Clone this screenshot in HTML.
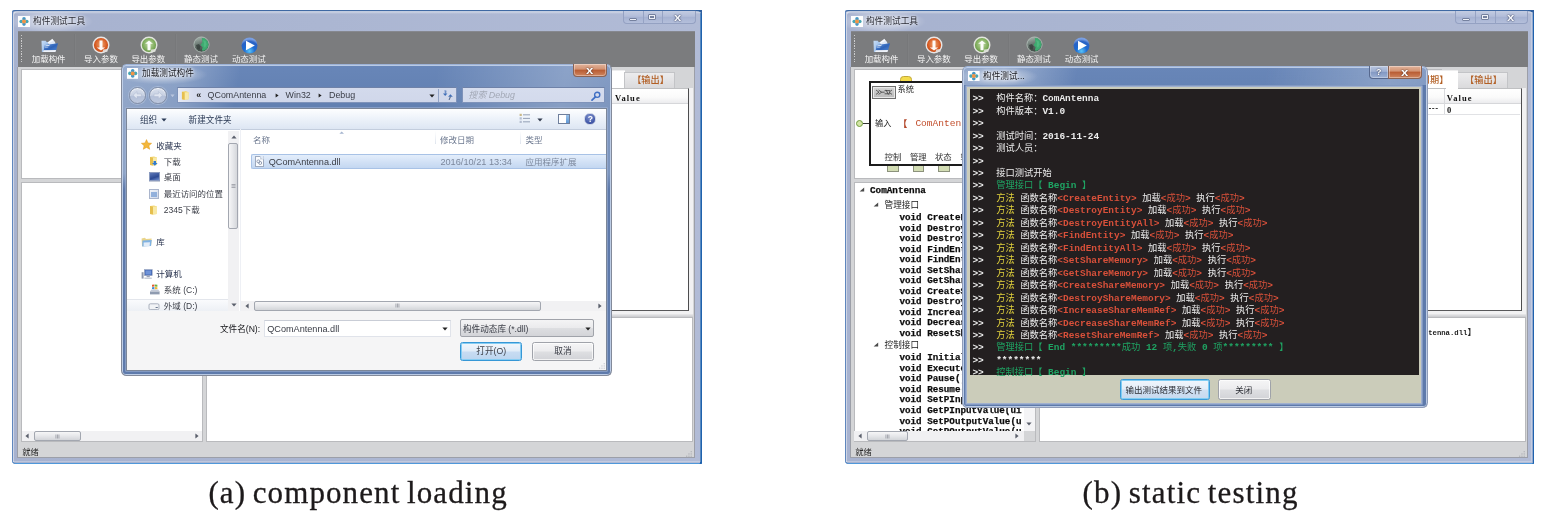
<!DOCTYPE html>
<html lang="zh"><head><meta charset="utf-8">
<title>component test tool</title>
<style>
html,body{margin:0;padding:0;background:#fff;}
body{width:1549px;height:516px;overflow:hidden;position:relative;}
#stage{filter:blur(.5px);position:absolute;left:0;top:0;width:1549px;height:516px;overflow:hidden;background:#fff;}
#stage div,#stage svg{position:absolute;box-sizing:border-box;}
.t{white-space:nowrap;}
.cjk{font-family:"Liberation Sans","Noto Sans CJK SC",sans-serif;}
.mono{font-family:"Liberation Mono","Noto Sans CJK SC",monospace;}
.serif{font-family:"Liberation Serif","Noto Serif CJK SC",serif;}
.song{font-family:"Liberation Serif","Noto Serif CJK SC",serif;}
.con{font-family:"Liberation Mono","Noto Sans CJK SC",monospace;font-weight:bold;}
.cj{font-size:9.25px;font-weight:normal;}
</style></head>
<body>
<div id="stage">
<div style="left:12px;top:10px;width:690px;height:453.6px;border-radius:2.5px 1px 1px 4px;background:linear-gradient(90deg,#a7b2cf 0%,#abb6d2 45%,#b1bbd6 100%);box-shadow:inset 1px 0 0 #5f86bd, inset 0 1.3px 0 #3f69a3, inset -2px 0 0 #1f62ad, inset 0 -1px 0 #4f98da;"></div>
<svg style="left:696px;top:10px;" width="6" height="6" viewBox="0 0 6 6"><path d="M0 0 H6 V6 Q5.6 1.4 0 1.2 Z" fill="#2f5f9f"/></svg>
<div style="left:13px;top:11px;width:687.5px;height:451px;border-radius:4px 4px 0 0;box-shadow:inset 1px 1px 0 rgba(255,255,255,.45), inset -1px -1px 0 rgba(255,255,255,.25);"></div>
<div style="left:13.5px;top:11.5px;width:86.5px;height:19.5px;background:radial-gradient(ellipse 50% 60% at 42% 50%,rgba(255,255,255,.5) 0%,rgba(255,255,255,.32) 55%,rgba(255,255,255,0) 100%);"></div>
<div style="left:13.5px;top:11.6px;width:687px;height:2.6px;background:linear-gradient(180deg,rgba(255,255,255,.38),rgba(255,255,255,0));"></div>
<svg style="left:18.3px;top:15.6px;" width="12" height="11" viewBox="0 0 12 11"><rect x="0" y="0" width="12" height="11" fill="#fdfdfd"/><circle cx="6" cy="2.9" r="1.8" fill="#4597c4"/><circle cx="6" cy="8.1" r="1.8" fill="#4597c4"/><circle cx="3.2" cy="5.5" r="1.8" fill="#46a6b4"/><circle cx="8.8" cy="5.5" r="1.8" fill="#46a6b4"/><circle cx="6" cy="5.5" r="2" fill="#f39445"/></svg>
<div class="t cjk" style="left:33px;top:14.9px;line-height:12px;font-size:8.7px;color:#2a2b34;text-shadow:0 0 3px #fff;">构件测试工具</div>
<div style="left:622.5px;top:10.5px;width:73px;height:13.7px;border:1px solid #94a1c2;border-top:none;border-radius:0 0 4px 4px;background:linear-gradient(180deg,#c3cce2 0%,#b2bdd9 45%,#a5b2d2 50%,#b4bfdb 100%);"></div>
<div style="left:642.5px;top:11px;width:0.8px;height:12.5px;background:#96a3c4;"></div>
<div style="left:662px;top:11px;width:0.8px;height:12.5px;background:#96a3c4;"></div>
<div style="left:628.8px;top:17.5px;width:8.2px;height:3.5px;background:#eef0f6;border:0.8px solid #75819f;border-radius:1px;"></div>
<div style="left:648px;top:13.6px;width:8px;height:6.8px;background:#eef0f6;border:0.8px solid #75819f;border-radius:1px;"></div>
<div style="left:650px;top:15.8px;width:4px;height:2.6px;background:#b3bdd6;border:0.6px solid #75819f;"></div>
<div class="t cjk" style="left:674.2px;top:11.2px;line-height:12px;font-size:10.5px;color:#f7f8fc;font-weight:bold;text-shadow:0 0 1px #39435f,0 0 1.5px #39435f;transform:scaleX(1.25);transform-origin:left center;">x</div>
<div style="left:18px;top:31px;width:677px;height:35.9px;background:#7b7c7e;box-shadow:inset 0 1px 0 #86888f;"></div>
<div style="left:20.7px;top:34.5px;width:1.5px;height:29px;background:repeating-linear-gradient(180deg,#d9d9da 0,#d9d9da 1.3px,#7b7c7e 1.3px,#7b7c7e 2.62px);opacity:.85;"></div>
<div style="left:74.3px;top:33.5px;width:0.8px;height:31.5px;background:#77787a;box-shadow:1px 0 0 #7f8082;"></div>
<div style="left:174.7px;top:33.5px;width:0.8px;height:31.5px;background:#77787a;box-shadow:1px 0 0 #7f8082;"></div>
<svg style="left:40.5px;top:37.7px;" width="18" height="15.5" viewBox="0 0 18 15.5"><defs><linearGradient id="fa0" x1="0" y1="0" x2="1" y2="1"><stop offset="0" stop-color="#c8def7"/><stop offset="1" stop-color="#86aee2"/></linearGradient><linearGradient id="fb0" x1="0" y1="0" x2="1" y2="1"><stop offset="0" stop-color="#6a9ee4"/><stop offset=".55" stop-color="#2f63b8"/><stop offset="1" stop-color="#4c84d2"/></linearGradient></defs><path d="M0.5 2.8 H4.8 L5.6 4 H7.4 V14 H0.9 Z" fill="url(#fa0)"/><path d="M6.7 4.2 L11.4 0.8 L14.2 4.8 L8.3 7.3 Z" fill="#f5f8fd"/><path d="M7.6 5.6 L12.6 2.6 L14.8 5.4 L9 7.6 Z" fill="#dfe8f6"/><path d="M3.8 6.9 L17 5.3 L15.1 12.4 L2.7 12.6 Z" fill="url(#fb0)"/><path d="M4.4 7.2 L8.7 6.7 L8.3 8 L4.1 8.6 Z" fill="#e6eefa" opacity=".85"/><path d="M4 9.2 L7.4 8.8 L7.2 9.6 L3.8 10 Z" fill="#cfe0f6" opacity=".7"/><path d="M2.7 12.3 L15.1 12.1 L14.5 14 L2.1 14 Z" fill="#eef2f9"/></svg>
<svg style="left:92.4px;top:36.2px;" width="18" height="18" viewBox="0 0 18 18"><defs><radialGradient id="go0" cx=".5" cy=".45" r=".6"><stop offset="0" stop-color="#f0a470"/><stop offset=".7" stop-color="#d65a22"/><stop offset="1" stop-color="#bd4512"/></radialGradient></defs><circle cx="9" cy="9" r="8.5" fill="#e7e6e6"/><circle cx="9" cy="9" r="7.1" fill="url(#go0)"/><path d="M7.5 4.4 H10.5 V11.4 H13.2 L9 14.5 L4.8 11.4 H7.5 Z" fill="#fff" opacity=".95"/><path d="M11.2 13.6 L15.8 13 L15.4 15.8 L10.4 16.4 Z" fill="#e4e0de" opacity=".9"/></svg>
<svg style="left:140.3px;top:36.2px;" width="18" height="18" viewBox="0 0 18 18"><defs><radialGradient id="gg0" cx=".5" cy=".45" r=".6"><stop offset="0" stop-color="#c4dca8"/><stop offset=".7" stop-color="#7dab5a"/><stop offset="1" stop-color="#5d8c3e"/></radialGradient></defs><circle cx="9" cy="9" r="8.5" fill="#e3e5df"/><circle cx="9" cy="9" r="7.1" fill="url(#gg0)"/><path d="M7.5 14.2 H10.5 V7.8 H12.9 L9 4.6 L5.1 7.8 H7.5 Z" fill="#fff" opacity=".95"/><path d="M11.2 13.6 L15.8 13 L15.4 15.8 L10.4 16.4 Z" fill="#e0e3dc" opacity=".9"/></svg>
<svg style="left:192.9px;top:36.3px;" width="17" height="17" viewBox="0 0 17 17"><defs><linearGradient id="gd0" x1=".2" y1="0" x2=".5" y2="1"><stop offset="0" stop-color="#a9b6b0"/><stop offset=".45" stop-color="#6d7b75"/><stop offset="1" stop-color="#3b4541"/></linearGradient></defs><circle cx="8.5" cy="8.5" r="7.6" fill="url(#gd0)" stroke="#b4c0ba" stroke-width=".8"/><path d="M8.8 2 L11.6 2.3 L14.4 4.8 L15.6 8.4 L14.4 12.2 L11.2 14.8 L8.8 14.6 L9.6 11.2 L7.6 9 L9.4 6.2 Z" fill="#3eaa70"/><path d="M10 4 L12.6 5 L13.6 8.6 L12 12 L10.6 10 L11 7 Z" fill="#56bd86" opacity=".7"/><path d="M3 9 L6 8 L7.6 10.6 L6.4 14 L4 12.8 Z" fill="#323b38" opacity=".75"/></svg>
<svg style="left:240.5px;top:36.5px;" width="17" height="17" viewBox="0 0 17 17"><defs><radialGradient id="gb0" cx=".5" cy=".85" r=".75"><stop offset="0" stop-color="#58c4f8"/><stop offset=".45" stop-color="#1d6ad2"/><stop offset=".8" stop-color="#2a62c4"/><stop offset="1" stop-color="#7a9fe2"/></radialGradient></defs><circle cx="8.5" cy="8.5" r="8" fill="url(#gb0)"/><path d="M5 3.8 L13.8 8.5 L5 13.2 Z" fill="#fff"/></svg>
<div class="t cjk" style="left:31.8px;top:53.2px;line-height:12px;font-size:8.45px;color:#f4f4f4;">加载构件</div>
<div class="t cjk" style="left:84.1px;top:53.2px;line-height:12px;font-size:8.45px;color:#f4f4f4;">导入参数</div>
<div class="t cjk" style="left:131.4px;top:53.2px;line-height:12px;font-size:8.45px;color:#f4f4f4;">导出参数</div>
<div class="t cjk" style="left:184.1px;top:53.2px;line-height:12px;font-size:8.45px;color:#f4f4f4;">静态测试</div>
<div class="t cjk" style="left:231.9px;top:53.2px;line-height:12px;font-size:8.45px;color:#f4f4f4;">动态测试</div>
<div style="left:17.4px;top:66.9px;width:677.6px;height:391.1px;background:#d4d5d7;border:1px solid #9c9fa8;border-top:none;"></div>
<div class="t cjk" style="left:22.3px;top:446px;line-height:12px;font-size:8.3px;color:#2a2a2a;">就绪</div>
<svg style="left:685px;top:449.5px;" width="8" height="8" viewBox="0 0 8 8"><g fill="#b4b6bb"><rect x="5.6" y="1" width="1.3" height="1.3"/><rect x="5.6" y="3.3" width="1.3" height="1.3"/><rect x="3.3" y="3.3" width="1.3" height="1.3"/><rect x="5.6" y="5.6" width="1.3" height="1.3"/><rect x="3.3" y="5.6" width="1.3" height="1.3"/><rect x="1" y="5.6" width="1.3" height="1.3"/></g></svg>
<div style="left:20.8px;top:68.8px;width:182px;height:110.4px;background:#fff;border:1px solid #b9babd;"></div>
<div style="left:20.8px;top:182.2px;width:182px;height:260px;background:#fff;border:1px solid #b9babd;"></div>
<div style="left:205.6px;top:68.8px;width:403.9px;height:241.8px;background:#fff;border:1px solid #b9babd;"></div>
<div style="left:205.6px;top:317.4px;width:487px;height:124.8px;background:#fff;border:1px solid #b9babd;"></div>
<div style="left:612.4px;top:88.4px;width:81px;height:226px;background:#f1f1f2;"></div>
<div style="left:205.6px;top:314.4px;width:487.8px;height:3px;background:linear-gradient(180deg,#e9e9eb,#c9cacd);"></div>
<div style="left:612.4px;top:69.6px;width:12.6px;height:19.9px;background:#fff;border-top:1px solid #ededee;"></div>
<div style="left:624.4px;top:71.8px;width:51px;height:16.2px;background:linear-gradient(180deg,#ececed 0%,#e3e3e5 50%,#dadadc 100%);border:1px solid #c3c4c7;border-bottom:none;"></div>
<div class="t cjk" style="left:632.2px;top:74.2px;line-height:12px;font-size:9.2px;color:#b25f24;font-weight:500;">【输出】</div>
<div style="left:612.4px;top:88.4px;width:76.8px;height:222.6px;background:#fff;border-right:1.4px solid #4d4d4f;border-bottom:1.4px solid #58585a;border-top:1px solid #bfc0c2;"></div>
<div style="left:612.4px;top:89.4px;width:75.4px;height:14.4px;background:linear-gradient(180deg,#fff 0%,#fafafa 60%,#ececee 100%);border-bottom:1px solid #d6d7da;"></div>
<div style="left:21.8px;top:431px;width:180px;height:10.2px;background:#f1f1f3;"></div>
<div style="left:34px;top:431.3px;width:47.4px;height:9.7px;border:1px solid #a3a7b0;border-radius:2px;background:linear-gradient(180deg,#f6f6f7 0%,#e6e7ea 50%,#d3d5d9 100%);"></div>
<svg style="left:55.2px;top:433.6px;" width="5" height="5" viewBox="0 0 5 5"><g fill="#8d9099"><rect x="0.6" y="0.5" width=".7" height="4"/><rect x="2.1" y="0.5" width=".7" height="4"/><rect x="3.6" y="0.5" width=".7" height="4"/></g></svg>
<svg style="left:25.2px;top:433.2px;" width="4" height="6" viewBox="0 0 4 6"><path d="M3.6 0.4 V5.6 L0.4 3 Z" fill="#5a5f6b"/></svg>
<svg style="left:195px;top:433.2px;" width="4" height="6" viewBox="0 0 4 6"><path d="M0.4 0.4 V5.6 L3.6 3 Z" fill="#5a5f6b"/></svg>
<div class="t song" style="left:615px;top:92.2px;line-height:12px;font-size:8.5px;color:#111;font-weight:bold;letter-spacing:1.05px;">Value</div>
<div style="left:121.1px;top:63.8px;width:491px;height:311.9px;border-radius:5.5px;border:1px solid #838a9a;border-top-color:#9db2d6;background:linear-gradient(100deg,rgba(255,255,255,.30) 0%,rgba(255,255,255,.24) 12%,rgba(255,255,255,0) 22%,rgba(255,255,255,0) 58%,rgba(255,255,255,.24) 82%,rgba(255,255,255,.12) 100%),linear-gradient(180deg,#6886b8 0%,#6280b1 12%,#6280b0 100%);box-shadow:inset 0 0 0 1px rgba(200,214,236,.85);"></div>
<div style="left:123.1px;top:106.7px;width:487px;height:267px;border-radius:0 0 3px 3px;background:linear-gradient(180deg,rgba(95,124,174,0) 0%,rgba(95,124,174,0) 24.83%,#5e7aab 30.83%,#5e7aab 100%);"></div>
<div style="left:125.9px;top:107.7px;width:481.3px;height:263.2px;background:#7b8698;box-shadow:0 0 0 .6px rgba(170,188,220,.8);"></div>
<div style="left:126.9px;top:108.7px;width:479.3px;height:261.2px;background:#fff;"></div>
<div style="left:123.5px;top:65.5px;width:91.5px;height:18.5px;background:radial-gradient(ellipse 50% 55% at 42% 48%,rgba(255,255,255,.5) 0%,rgba(255,255,255,.28) 55%,rgba(255,255,255,0) 100%);"></div>
<svg style="left:127px;top:68.2px;" width="11.4" height="10.8" viewBox="0 0 11.4 10.8"><rect x="0" y="0" width="11.4" height="10.8" fill="#fdfdfd"/><circle cx="5.7" cy="2.8" r="1.8" fill="#4597c4"/><circle cx="5.7" cy="8" r="1.8" fill="#4597c4"/><circle cx="2.9" cy="5.4" r="1.8" fill="#46a6b4"/><circle cx="8.5" cy="5.4" r="1.8" fill="#46a6b4"/><circle cx="5.7" cy="5.4" r="2" fill="#f39445"/></svg>
<div class="t cjk" style="left:142px;top:67.3px;line-height:12px;font-size:8.65px;color:#15161c;text-shadow:0 0 3px #fff,0 0 5px #fff;">加载测试构件</div>
<div style="left:573.3px;top:64.4px;width:33.7px;height:12.2px;border-radius:0 0 4px 4px;border:1px solid #8a6253;border-top:none;background:linear-gradient(180deg,#e2b49c 0%,#d39474 42%,#b95d34 52%,#cf8660 100%);box-shadow:inset 0 0 0 1px rgba(255,255,255,.35);"></div>
<div class="t cjk" style="left:586.3px;top:63.6px;line-height:12px;font-size:10.5px;color:#fff;font-weight:bold;text-shadow:0 0 1px #5a3326,0 0 1.5px #5a3326;transform:scaleX(1.25);transform-origin:left center;">x</div>
<div style="left:128.8px;top:86.5px;width:17.6px;height:17.6px;border-radius:50%;border:1.2px solid #8490a8;background:linear-gradient(180deg,#d6ddeb 0%,#c9d2e3 48%,#b5c1d9 54%,#bcc7dd 100%);box-shadow:inset 0 1px 1px rgba(255,255,255,.7), 0 0 0 1px rgba(190,203,228,.5);"></div>
<div style="left:149.4px;top:86.5px;width:17.6px;height:17.6px;border-radius:50%;border:1.2px solid #8490a8;background:linear-gradient(180deg,#d6ddeb 0%,#c9d2e3 48%,#b5c1d9 54%,#bcc7dd 100%);box-shadow:inset 0 1px 1px rgba(255,255,255,.7), 0 0 0 1px rgba(190,203,228,.5);"></div>
<svg style="left:132.4px;top:91px;" width="10.4" height="8.6" viewBox="0 0 10.4 8.6"><path d="M5 0.6 L1 4.3 L5 8 V5.6 H9.4 V3 H5 Z" fill="#dfe5f0" stroke="#aab6cf" stroke-width=".5"/></svg>
<svg style="left:153px;top:91px;" width="10.4" height="8.6" viewBox="0 0 10.4 8.6"><path d="M5.4 0.6 L9.4 4.3 L5.4 8 V5.6 H1 V3 H5.4 Z" fill="#dfe5f0" stroke="#aab6cf" stroke-width=".5"/></svg>
<svg style="left:169.6px;top:93.8px;" width="5" height="3.6" viewBox="0 0 5 3.6"><path d="M0.4 0.6 H4.6 L2.5 3.2 Z" fill="#b9c6de"/></svg>
<div style="left:177.4px;top:87px;width:279.2px;height:15.5px;background:linear-gradient(90deg,#e6eaf5 0%,#d6dcee 6%,rgba(208,215,234,0) 12%),linear-gradient(180deg,#d3daec 0%,#d0d7ea 100%);border:1px solid #7f93ba;border-top-color:#6f82a8;"></div>
<svg style="left:181.4px;top:89.6px;" width="9" height="11.4" viewBox="0 0 9.5 10.5"><path d="M1 1 L5 0.4 L8 1.6 L8 9 L4 9.4 L1 9 Z" fill="#f2d777"/><path d="M1 1 L4 1.8 L4 9.4 L1 9 Z" fill="#e6bf4e"/><path d="M4 1.8 L8 1.6 L8 9 L4 9.4 Z" fill="#f8e9a6"/></svg>
<div class="t cjk" style="left:196.2px;top:88.8px;line-height:12px;font-size:9px;color:#222;font-weight:bold;">«</div>
<div class="t cjk" style="left:207.6px;top:89.2px;line-height:12px;font-size:8.9px;color:#3a3d46;">QComAntenna</div>
<svg style="left:274.6px;top:93px;" width="4" height="5" viewBox="0 0 4 5"><path d="M0.6 0.4 L3.6 2.5 L0.6 4.6 Z" fill="#222"/></svg>
<div class="t cjk" style="left:285.6px;top:89.2px;line-height:12px;font-size:8.9px;color:#3a3d46;">Win32</div>
<svg style="left:317.8px;top:93px;" width="4" height="5" viewBox="0 0 4 5"><path d="M0.6 0.4 L3.6 2.5 L0.6 4.6 Z" fill="#222"/></svg>
<div class="t cjk" style="left:329px;top:89.2px;line-height:12px;font-size:8.9px;color:#3a3d46;">Debug</div>
<svg style="left:429.2px;top:94px;" width="6" height="4" viewBox="0 0 6 4"><path d="M0.4 0.5 H5.6 L3 3.6 Z" fill="#222"/></svg>
<div style="left:438.2px;top:88.8px;width:0.8px;height:13px;background:#93a4c6;"></div>
<svg style="left:443px;top:89.5px;" width="10" height="10.5" viewBox="0 0 10 10.5"><path d="M1.5 0.1 L3.5 0.7 L3.2 3.7 L1.8 3.7 Z" fill="#6f8fc4"/><path d="M0 3.6 H4.4 L2.2 6.1 Z" fill="#3f6fb8"/><path d="M5.1 6.7 H9.8 L7.45 4.3 Z" fill="#3f6fb8"/><path d="M6.9 6.6 L8.1 6.6 L6.4 10.3 L5.6 10 Z" fill="#56688a"/></svg>
<div style="left:461.6px;top:87px;width:143.6px;height:15.5px;background:linear-gradient(180deg,#d6ddee 0%,#d3daec 100%);border:1px solid #7f93ba;border-top-color:#6f82a8;"></div>
<div class="t cjk" style="left:468.6px;top:89.2px;line-height:12px;font-size:8.9px;color:#a3a9b6;font-style:italic;">搜索 Debug</div>
<svg style="left:591.4px;top:90.6px;" width="10" height="10" viewBox="0 0 10 10"><circle cx="6.2" cy="3.8" r="2.6" fill="none" stroke="#3f6fc4" stroke-width="1.4"/><path d="M4.4 5.8 L1 9.2" stroke="#3f6fc4" stroke-width="1.7" stroke-linecap="round"/></svg>
<div style="left:126.9px;top:108.7px;width:479.3px;height:21.3px;background:linear-gradient(180deg,#fdfeff 0%,#eef3fa 45%,#dde6f3 100%);border-bottom:1px solid #c3cddd;"></div>
<div class="t cjk" style="left:140px;top:114.1px;line-height:12px;font-size:8.6px;color:#2b3a55;">组织</div>
<svg style="left:161.2px;top:118.4px;" width="6" height="4" viewBox="0 0 6 4"><path d="M0.4 0.5 H5.6 L3 3.6 Z" fill="#2b3a55"/></svg>
<div class="t cjk" style="left:188.6px;top:114.1px;line-height:12px;font-size:8.6px;color:#2b3a55;">新建文件夹</div>
<svg style="left:519.4px;top:113.4px;" width="12" height="11" viewBox="0 0 12 11"><g fill="#8a97ae"><rect x="0.6" y="0.8" width="2.2" height="2.2" fill="#c9b98a"/><rect x="0.6" y="4.3" width="2.2" height="2.2" fill="#b4bdd0"/><rect x="0.6" y="7.8" width="2.2" height="2.2" fill="#b4bdd0"/><rect x="4" y="1.4" width="7" height=".9"/><rect x="4" y="4.9" width="7" height=".9"/><rect x="4" y="8.4" width="7" height=".9"/></g></svg>
<svg style="left:537px;top:117.6px;" width="6" height="4" viewBox="0 0 6 4"><path d="M0.4 0.5 H5.6 L3 3.6 Z" fill="#333c4e"/></svg>
<div style="left:558.4px;top:113.8px;width:11.8px;height:10.4px;background:#fff;border:1px solid #6f7f9c;"></div>
<div style="left:566px;top:114.8px;width:3.2px;height:8.4px;background:linear-gradient(180deg,#9cc3ea,#5f97d6);"></div>
<div style="left:584.4px;top:113.4px;width:11.2px;height:11.2px;border-radius:50%;background:radial-gradient(circle at 45% 30%,#7f93cf 0%,#3f55a6 70%,#32438c 100%);border:.6px solid #c7cfe4;"></div>
<div class="t cjk" style="left:587.7px;top:113.2px;line-height:12px;font-size:8.6px;color:#fff;font-weight:bold;">?</div>
<div style="left:126.9px;top:130px;width:479.3px;height:181.4px;background:#fff;"></div>
<div style="left:228px;top:131px;width:10.8px;height:180.4px;background:#f1f1f3;"></div>
<div style="left:228.4px;top:143.4px;width:10px;height:85.2px;border:1px solid #a3a7b0;border-radius:2px;background:linear-gradient(90deg,#f6f6f7 0%,#e6e7ea 50%,#d5d7db 100%);"></div>
<svg style="left:231px;top:184.4px;" width="5" height="4" viewBox="0 0 5 4"><g fill="#8d9099"><rect x="0.5" y="0.2" width="4" height=".7"/><rect x="0.5" y="1.6" width="4" height=".7"/><rect x="0.5" y="3" width="4" height=".7"/></g></svg>
<svg style="left:230.6px;top:135.4px;" width="6" height="4" viewBox="0 0 6 4"><path d="M3 0.4 L5.6 3.6 H0.4 Z" fill="#5a5f6b"/></svg>
<svg style="left:230.6px;top:303.4px;" width="6" height="4" viewBox="0 0 6 4"><path d="M0.4 0.4 H5.6 L3 3.6 Z" fill="#5a5f6b"/></svg>
<div style="left:239.6px;top:129px;width:0.8px;height:182.4px;background:#eef0f5;"></div>
<svg style="left:141.4px;top:139.4px;" width="11" height="11" viewBox="0 0 11 11"><path d="M5.5 0.6 L7 4 L10.6 4.3 L7.9 6.7 L8.7 10.3 L5.5 8.4 L2.3 10.3 L3.1 6.7 L0.4 4.3 L4 4 Z" fill="#f3b73c" stroke="#e09a1d" stroke-width=".5"/></svg>
<div class="t cjk" style="left:156.3px;top:139.6px;line-height:12px;font-size:8.5px;color:#2a3550;">收藏夹</div>
<svg style="left:149.4px;top:156px;" width="9.5" height="10.5" viewBox="0 0 9.5 10.5"><path d="M1 1 L5 0.4 L8 1.6 L8 9 L4 9.4 L1 9 Z" fill="#f2d777"/><path d="M1 1 L4 1.8 L4 9.4 L1 9 Z" fill="#e6bf4e"/><path d="M4 1.8 L8 1.6 L8 9 L4 9.4 Z" fill="#f8e9a6"/><path d="M4.6 5 H7 V7 H8.6 L5.8 9.8 L3 7 H4.6 Z" fill="#2f7ad1"/></svg>
<div class="t cjk" style="left:163.8px;top:155.6px;line-height:12px;font-size:8.5px;color:#3a3d46;">下载</div>
<div style="left:148.6px;top:172.4px;width:11px;height:8.2px;background:linear-gradient(160deg,#5d78b8 0%,#2c4a94 60%,#6f8fd0 100%);border:.6px solid #8a9abf;"></div>
<div style="left:148.6px;top:180.6px;width:11px;height:1.4px;background:#c5cbd8;"></div>
<div class="t cjk" style="left:163.8px;top:171.4px;line-height:12px;font-size:8.5px;color:#3a3d46;">桌面</div>
<div style="left:149.2px;top:188.6px;width:10.2px;height:10.8px;background:linear-gradient(135deg,#f2f4f8 0%,#cfd9ea 100%);border:.6px solid #aab5cc;"></div>
<div style="left:151.4px;top:191.6px;width:6px;height:5px;background:#7ea3d6;opacity:.8;"></div>
<div class="t cjk" style="left:163.8px;top:188px;line-height:12px;font-size:8.45px;color:#3a3d46;">最近访问的位置</div>
<svg style="left:149.4px;top:204.6px;" width="9.5" height="10.5" viewBox="0 0 9.5 10.5"><path d="M1 1 L5 0.4 L8 1.6 L8 9 L4 9.4 L1 9 Z" fill="#f2d777"/><path d="M1 1 L4 1.8 L4 9.4 L1 9 Z" fill="#e6bf4e"/><path d="M4 1.8 L8 1.6 L8 9 L4 9.4 Z" fill="#f8e9a6"/></svg>
<div class="t cjk" style="left:163.8px;top:203.8px;line-height:12px;font-size:8.5px;color:#3a3d46;">2345下载</div>
<svg style="left:141.4px;top:236.4px;" width="11.4" height="11" viewBox="0 0 11.4 11"><path d="M0.6 2.6 L4 1.8 L5 3 L10.6 2.6 L10.2 9.6 L1 10.2 Z" fill="#e9d48a"/><path d="M1.4 4.6 L10.8 4 L10 10 L1.2 10.4 Z" fill="#7fb2e4"/><path d="M2.6 6.6 L9 6.2 L8.6 10 L2.6 10.3 Z" fill="#f4f7fb" opacity=".85"/></svg>
<div class="t cjk" style="left:156.3px;top:236px;line-height:12px;font-size:8.5px;color:#2a3550;">库</div>
<svg style="left:141.4px;top:268.6px;" width="12" height="11.4" viewBox="0 0 12 11.4"><rect x="3.4" y="0.6" width="7.8" height="6" fill="#3b5fae" stroke="#9aa6c0" stroke-width=".6"/><rect x="4.4" y="1.4" width="5.8" height="4.2" fill="#6f93d8"/><rect x="5.6" y="6.8" width="3.2" height="1.4" fill="#9aa3b6"/><rect x="0.6" y="3.2" width="2" height="6.4" fill="#8f98ac"/><rect x="3.4" y="8.6" width="7.4" height="1.2" fill="#b9c0cf"/></svg>
<div class="t cjk" style="left:156.3px;top:268.3px;line-height:12px;font-size:8.5px;color:#2a3550;">计算机</div>
<svg style="left:148.6px;top:284.2px;" width="11.6" height="11.2" viewBox="0 0 11.6 11.2"><path d="M1 7.4 H10.6 V10.4 H1 Z" fill="#8f9bb0"/><path d="M1 7.4 L2.4 5.6 H9.2 L10.6 7.4 Z" fill="#c3cad8"/><path d="M3 0.8 L5.4 0.4 L5.4 2.6 L3 2.8 Z" fill="#e2592d"/><path d="M5.8 0.4 L8.4 0.8 L8.4 2.8 L5.8 2.6 Z" fill="#6db33f"/><path d="M3 3.2 L5.4 3 L5.4 5.2 L3 5 Z" fill="#3f8bd8"/><path d="M5.8 3 L8.4 3.2 L8.4 5 L5.8 5.2 Z" fill="#f2b734"/></svg>
<div class="t cjk" style="left:163.8px;top:284.2px;line-height:12px;font-size:8.5px;color:#3a3d46;">系统 (C:)</div>
<div style="left:126.9px;top:298.6px;width:101.1px;height:12.8px;background:linear-gradient(180deg,#fafbfd 0%,#edf0f5 100%);border-top:1px solid #e3e6ec;"></div>
<svg style="left:148.4px;top:301.6px;" width="12" height="8.8" viewBox="0 0 12 8.8"><path d="M1 3 Q1 1.8 2.4 1.8 H9.6 Q11 1.8 11 3 V6.4 Q11 7.6 9.6 7.6 H2.4 Q1 7.6 1 6.4 Z" fill="#f1f3f6" stroke="#8e97a8" stroke-width=".7"/><rect x="7.6" y="5" width="2.2" height="1" fill="#6b7890"/></svg>
<div class="t cjk" style="left:163.8px;top:300.1px;line-height:12px;font-size:8.5px;color:#3a3d46;">外域 (D:)</div>
<div class="t cjk" style="left:253px;top:134.3px;line-height:12px;font-size:8.5px;color:#6d7990;">名称</div>
<svg style="left:339.4px;top:131.4px;" width="5.4" height="3.2" viewBox="0 0 5.4 3.2"><path d="M2.7 0.4 L5 2.8 H0.4 Z" fill="#a5b5cf"/></svg>
<div style="left:435.4px;top:131px;width:0.8px;height:13px;background:linear-gradient(180deg,#fff,#dfe5ee);"></div>
<div style="left:520.4px;top:131px;width:0.8px;height:13px;background:linear-gradient(180deg,#fff,#dfe5ee);"></div>
<div class="t cjk" style="left:440px;top:134.3px;line-height:12px;font-size:8.5px;color:#6d7990;">修改日期</div>
<div class="t cjk" style="left:525.6px;top:134.3px;line-height:12px;font-size:8.5px;color:#6d7990;">类型</div>
<div style="left:250.8px;top:153.8px;width:355.4px;height:15.6px;background:linear-gradient(180deg,#e4eefb 0%,#d3e2f6 50%,#c3d7f1 100%);border:1px solid #a8c2e6;border-right:none;border-radius:2px 0 0 2px;"></div>
<div style="left:254.6px;top:156.2px;width:9px;height:10.4px;background:#fbfcfe;border:.7px solid #9da9bd;"></div>
<svg style="left:260.2px;top:156.2px;" width="3.6" height="3.6" viewBox="0 0 3.6 3.6"><path d="M0 0 L3.6 3.6 H0 Z" fill="#c9d1de"/><path d="M0 0 L3.6 3.6 V0 Z" fill="#dfe9f8"/></svg>
<svg style="left:256px;top:158.6px;" width="6.4" height="6.2" viewBox="0 0 6.4 6.2"><circle cx="2.4" cy="2.4" r="1.5" fill="none" stroke="#7f8da6" stroke-width=".8"/><circle cx="4.2" cy="4" r="1.5" fill="none" stroke="#7f8da6" stroke-width=".8"/></svg>
<div class="t cjk" style="left:268.8px;top:155.7px;line-height:12px;font-size:9.1px;color:#3a3d46;">QComAntenna.dll</div>
<div class="t cjk" style="left:440.4px;top:155.7px;line-height:12px;font-size:9.2px;color:#7b879c;">2016/10/21 13:34</div>
<div class="t cjk" style="left:525.6px;top:155.7px;line-height:12px;font-size:8.5px;color:#7b879c;">应用程序扩展</div>
<div style="left:241px;top:300.6px;width:365.2px;height:10.8px;background:#f1f1f3;"></div>
<div style="left:254.4px;top:301px;width:287px;height:9.8px;border:1px solid #a3a7b0;border-radius:2px;background:linear-gradient(180deg,#f6f6f7 0%,#e6e7ea 50%,#d3d5d9 100%);"></div>
<svg style="left:395px;top:303.4px;" width="5" height="5" viewBox="0 0 5 5"><g fill="#8d9099"><rect x="0.6" y="0.5" width=".7" height="4"/><rect x="2.1" y="0.5" width=".7" height="4"/><rect x="3.6" y="0.5" width=".7" height="4"/></g></svg>
<svg style="left:245px;top:303px;" width="4" height="6" viewBox="0 0 4 6"><path d="M3.6 0.4 V5.6 L0.4 3 Z" fill="#5a5f6b"/></svg>
<svg style="left:598.4px;top:303px;" width="4" height="6" viewBox="0 0 4 6"><path d="M0.4 0.4 V5.6 L3.6 3 Z" fill="#5a5f6b"/></svg>
<div style="left:126.9px;top:311.4px;width:479.3px;height:59px;background:#f5f5f6;"></div>
<div class="t cjk" style="left:220px;top:322.6px;line-height:12px;font-size:8.6px;color:#15161a;">文件名(N):</div>
<div style="left:264.4px;top:320px;width:186.4px;height:17px;background:#fff;border:1px solid #e0e3ea;border-top-color:#c9cdd6;"></div>
<div class="t cjk" style="left:267.2px;top:322.7px;line-height:12px;font-size:9.15px;color:#3a3d46;">QComAntenna.dll</div>
<svg style="left:441.6px;top:327px;" width="6" height="4" viewBox="0 0 6 4"><path d="M0.4 0.5 H5.6 L3 3.6 Z" fill="#222"/></svg>
<div style="left:460.4px;top:319.4px;width:133.6px;height:17.6px;border:1px solid #a0a3aa;border-radius:2px;background:linear-gradient(180deg,#f4f4f5 0%,#ebebed 48%,#dddee1 52%,#d3d4d8 100%);"></div>
<div class="t cjk" style="left:463px;top:322.5px;line-height:12px;font-size:8.6px;color:#3a3d46;">构件动态库 (*.dll)</div>
<svg style="left:584.6px;top:326.8px;" width="6" height="4" viewBox="0 0 6 4"><path d="M0.4 0.5 H5.6 L3 3.6 Z" fill="#222"/></svg>
<div style="left:460.4px;top:341.6px;width:61.8px;height:19.2px;border:1px solid #3697d6;border-radius:2.5px;background:linear-gradient(180deg,#f2f7fc 0%,#e1ecf8 48%,#c8dcf2 52%,#bcd5ef 100%);box-shadow:inset 0 0 0 1px #86cdf3;"></div>
<div class="t cjk" style="left:476.2px;top:345.2px;line-height:12px;font-size:8.7px;color:#3a3d46;">打开(O)</div>
<div style="left:532px;top:341.6px;width:62px;height:19.2px;border:1px solid #a0a3aa;border-radius:2.5px;background:linear-gradient(180deg,#f5f5f6 0%,#ececee 48%,#dedfe2 52%,#d2d3d7 100%);box-shadow:inset 0 0 0 1px rgba(255,255,255,.7);"></div>
<div class="t cjk" style="left:554.2px;top:345.2px;line-height:12px;font-size:8.7px;color:#3a3d46;">取消</div>
<svg style="left:598px;top:362px;" width="8" height="8" viewBox="0 0 8 8"><g fill="#cfd1d7"><rect x="5.6" y="1" width="1.3" height="1.3"/><rect x="5.6" y="3.3" width="1.3" height="1.3"/><rect x="3.3" y="3.3" width="1.3" height="1.3"/><rect x="5.6" y="5.6" width="1.3" height="1.3"/><rect x="3.3" y="5.6" width="1.3" height="1.3"/><rect x="1" y="5.6" width="1.3" height="1.3"/></g></svg>
<div style="left:844.9px;top:10px;width:689px;height:453.6px;border-radius:2.5px 1px 1px 4px;background:linear-gradient(90deg,#a7b2cf 0%,#abb6d2 45%,#b1bbd6 100%);box-shadow:inset 1px 0 0 #5f86bd, inset 0 1.3px 0 #3f69a3, inset -1.2px 0 0 #1f62ad, inset 0 -1px 0 #4f98da;"></div>
<svg style="left:1527.9px;top:10px;" width="6" height="6" viewBox="0 0 6 6"><path d="M0 0 H6 V6 Q5.6 1.4 0 1.2 Z" fill="#2f5f9f"/></svg>
<div style="left:845.9px;top:11px;width:686.5px;height:451px;border-radius:4px 4px 0 0;box-shadow:inset 1px 1px 0 rgba(255,255,255,.45), inset -1px -1px 0 rgba(255,255,255,.25);"></div>
<div style="left:846.4px;top:11.5px;width:86.5px;height:19.5px;background:radial-gradient(ellipse 50% 60% at 42% 50%,rgba(255,255,255,.5) 0%,rgba(255,255,255,.32) 55%,rgba(255,255,255,0) 100%);"></div>
<div style="left:846.4px;top:11.6px;width:687px;height:2.6px;background:linear-gradient(180deg,rgba(255,255,255,.38),rgba(255,255,255,0));"></div>
<svg style="left:851.2px;top:15.6px;" width="12" height="11" viewBox="0 0 12 11"><rect x="0" y="0" width="12" height="11" fill="#fdfdfd"/><circle cx="6" cy="2.9" r="1.8" fill="#4597c4"/><circle cx="6" cy="8.1" r="1.8" fill="#4597c4"/><circle cx="3.2" cy="5.5" r="1.8" fill="#46a6b4"/><circle cx="8.8" cy="5.5" r="1.8" fill="#46a6b4"/><circle cx="6" cy="5.5" r="2" fill="#f39445"/></svg>
<div class="t cjk" style="left:865.9px;top:14.9px;line-height:12px;font-size:8.7px;color:#2a2b34;text-shadow:0 0 3px #fff;">构件测试工具</div>
<div style="left:1455.4px;top:10.5px;width:73px;height:13.7px;border:1px solid #94a1c2;border-top:none;border-radius:0 0 4px 4px;background:linear-gradient(180deg,#c3cce2 0%,#b2bdd9 45%,#a5b2d2 50%,#b4bfdb 100%);"></div>
<div style="left:1475.4px;top:11px;width:0.8px;height:12.5px;background:#96a3c4;"></div>
<div style="left:1494.9px;top:11px;width:0.8px;height:12.5px;background:#96a3c4;"></div>
<div style="left:1461.7px;top:17.5px;width:8.2px;height:3.5px;background:#eef0f6;border:0.8px solid #75819f;border-radius:1px;"></div>
<div style="left:1480.9px;top:13.6px;width:8px;height:6.8px;background:#eef0f6;border:0.8px solid #75819f;border-radius:1px;"></div>
<div style="left:1482.9px;top:15.8px;width:4px;height:2.6px;background:#b3bdd6;border:0.6px solid #75819f;"></div>
<div class="t cjk" style="left:1507.1px;top:11.2px;line-height:12px;font-size:10.5px;color:#f7f8fc;font-weight:bold;text-shadow:0 0 1px #39435f,0 0 1.5px #39435f;transform:scaleX(1.25);transform-origin:left center;">x</div>
<div style="left:850.9px;top:31px;width:677px;height:35.9px;background:#7b7c7e;box-shadow:inset 0 1px 0 #86888f;"></div>
<div style="left:853.6px;top:34.5px;width:1.5px;height:29px;background:repeating-linear-gradient(180deg,#d9d9da 0,#d9d9da 1.3px,#7b7c7e 1.3px,#7b7c7e 2.62px);opacity:.85;"></div>
<div style="left:907.2px;top:33.5px;width:0.8px;height:31.5px;background:#77787a;box-shadow:1px 0 0 #7f8082;"></div>
<div style="left:1007.6px;top:33.5px;width:0.8px;height:31.5px;background:#77787a;box-shadow:1px 0 0 #7f8082;"></div>
<svg style="left:873.4px;top:37.7px;" width="18" height="15.5" viewBox="0 0 18 15.5"><defs><linearGradient id="fa832" x1="0" y1="0" x2="1" y2="1"><stop offset="0" stop-color="#c8def7"/><stop offset="1" stop-color="#86aee2"/></linearGradient><linearGradient id="fb832" x1="0" y1="0" x2="1" y2="1"><stop offset="0" stop-color="#6a9ee4"/><stop offset=".55" stop-color="#2f63b8"/><stop offset="1" stop-color="#4c84d2"/></linearGradient></defs><path d="M0.5 2.8 H4.8 L5.6 4 H7.4 V14 H0.9 Z" fill="url(#fa832)"/><path d="M6.7 4.2 L11.4 0.8 L14.2 4.8 L8.3 7.3 Z" fill="#f5f8fd"/><path d="M7.6 5.6 L12.6 2.6 L14.8 5.4 L9 7.6 Z" fill="#dfe8f6"/><path d="M3.8 6.9 L17 5.3 L15.1 12.4 L2.7 12.6 Z" fill="url(#fb832)"/><path d="M4.4 7.2 L8.7 6.7 L8.3 8 L4.1 8.6 Z" fill="#e6eefa" opacity=".85"/><path d="M4 9.2 L7.4 8.8 L7.2 9.6 L3.8 10 Z" fill="#cfe0f6" opacity=".7"/><path d="M2.7 12.3 L15.1 12.1 L14.5 14 L2.1 14 Z" fill="#eef2f9"/></svg>
<svg style="left:925.3px;top:36.2px;" width="18" height="18" viewBox="0 0 18 18"><defs><radialGradient id="go832" cx=".5" cy=".45" r=".6"><stop offset="0" stop-color="#f0a470"/><stop offset=".7" stop-color="#d65a22"/><stop offset="1" stop-color="#bd4512"/></radialGradient></defs><circle cx="9" cy="9" r="8.5" fill="#e7e6e6"/><circle cx="9" cy="9" r="7.1" fill="url(#go832)"/><path d="M7.5 4.4 H10.5 V11.4 H13.2 L9 14.5 L4.8 11.4 H7.5 Z" fill="#fff" opacity=".95"/><path d="M11.2 13.6 L15.8 13 L15.4 15.8 L10.4 16.4 Z" fill="#e4e0de" opacity=".9"/></svg>
<svg style="left:973.2px;top:36.2px;" width="18" height="18" viewBox="0 0 18 18"><defs><radialGradient id="gg832" cx=".5" cy=".45" r=".6"><stop offset="0" stop-color="#c4dca8"/><stop offset=".7" stop-color="#7dab5a"/><stop offset="1" stop-color="#5d8c3e"/></radialGradient></defs><circle cx="9" cy="9" r="8.5" fill="#e3e5df"/><circle cx="9" cy="9" r="7.1" fill="url(#gg832)"/><path d="M7.5 14.2 H10.5 V7.8 H12.9 L9 4.6 L5.1 7.8 H7.5 Z" fill="#fff" opacity=".95"/><path d="M11.2 13.6 L15.8 13 L15.4 15.8 L10.4 16.4 Z" fill="#e0e3dc" opacity=".9"/></svg>
<svg style="left:1025.8px;top:36.3px;" width="17" height="17" viewBox="0 0 17 17"><defs><linearGradient id="gd832" x1=".2" y1="0" x2=".5" y2="1"><stop offset="0" stop-color="#a9b6b0"/><stop offset=".45" stop-color="#6d7b75"/><stop offset="1" stop-color="#3b4541"/></linearGradient></defs><circle cx="8.5" cy="8.5" r="7.6" fill="url(#gd832)" stroke="#b4c0ba" stroke-width=".8"/><path d="M8.8 2 L11.6 2.3 L14.4 4.8 L15.6 8.4 L14.4 12.2 L11.2 14.8 L8.8 14.6 L9.6 11.2 L7.6 9 L9.4 6.2 Z" fill="#3eaa70"/><path d="M10 4 L12.6 5 L13.6 8.6 L12 12 L10.6 10 L11 7 Z" fill="#56bd86" opacity=".7"/><path d="M3 9 L6 8 L7.6 10.6 L6.4 14 L4 12.8 Z" fill="#323b38" opacity=".75"/></svg>
<svg style="left:1073.4px;top:36.5px;" width="17" height="17" viewBox="0 0 17 17"><defs><radialGradient id="gb832" cx=".5" cy=".85" r=".75"><stop offset="0" stop-color="#58c4f8"/><stop offset=".45" stop-color="#1d6ad2"/><stop offset=".8" stop-color="#2a62c4"/><stop offset="1" stop-color="#7a9fe2"/></radialGradient></defs><circle cx="8.5" cy="8.5" r="8" fill="url(#gb832)"/><path d="M5 3.8 L13.8 8.5 L5 13.2 Z" fill="#fff"/></svg>
<div class="t cjk" style="left:864.7px;top:53.2px;line-height:12px;font-size:8.45px;color:#f4f4f4;">加载构件</div>
<div class="t cjk" style="left:917px;top:53.2px;line-height:12px;font-size:8.45px;color:#f4f4f4;">导入参数</div>
<div class="t cjk" style="left:964.3px;top:53.2px;line-height:12px;font-size:8.45px;color:#f4f4f4;">导出参数</div>
<div class="t cjk" style="left:1017px;top:53.2px;line-height:12px;font-size:8.45px;color:#f4f4f4;">静态测试</div>
<div class="t cjk" style="left:1064.8px;top:53.2px;line-height:12px;font-size:8.45px;color:#f4f4f4;">动态测试</div>
<div style="left:850.3px;top:66.9px;width:677.6px;height:391.1px;background:#d4d5d7;border:1px solid #9c9fa8;border-top:none;"></div>
<div class="t cjk" style="left:855.2px;top:446px;line-height:12px;font-size:8.3px;color:#2a2a2a;">就绪</div>
<svg style="left:1517.9px;top:449.5px;" width="8" height="8" viewBox="0 0 8 8"><g fill="#b4b6bb"><rect x="5.6" y="1" width="1.3" height="1.3"/><rect x="5.6" y="3.3" width="1.3" height="1.3"/><rect x="3.3" y="3.3" width="1.3" height="1.3"/><rect x="5.6" y="5.6" width="1.3" height="1.3"/><rect x="3.3" y="5.6" width="1.3" height="1.3"/><rect x="1" y="5.6" width="1.3" height="1.3"/></g></svg>
<div style="left:853.7px;top:68.8px;width:182px;height:110.4px;background:#fff;border:1px solid #b9babd;"></div>
<div style="left:853.7px;top:182.2px;width:182px;height:260px;background:#fff;border:1px solid #b9babd;"></div>
<div style="left:1038.5px;top:68.8px;width:403.9px;height:241.8px;background:#fff;border:1px solid #b9babd;"></div>
<div style="left:1038.5px;top:317.4px;width:487px;height:124.8px;background:#fff;border:1px solid #b9babd;"></div>
<div style="left:1445.3px;top:88.4px;width:81px;height:226px;background:#f1f1f2;"></div>
<div style="left:1038.5px;top:314.4px;width:487.8px;height:3px;background:linear-gradient(180deg,#e9e9eb,#c9cacd);"></div>
<div style="left:1445.3px;top:69.6px;width:12.6px;height:19.9px;background:#fff;border-top:1px solid #ededee;"></div>
<div style="left:1457.3px;top:71.8px;width:51px;height:16.2px;background:linear-gradient(180deg,#ececed 0%,#e3e3e5 50%,#dadadc 100%);border:1px solid #c3c4c7;border-bottom:none;"></div>
<div class="t cjk" style="left:1465.1px;top:74.2px;line-height:12px;font-size:9.2px;color:#b25f24;font-weight:500;">【输出】</div>
<div style="left:1445.3px;top:88.4px;width:76.8px;height:222.6px;background:#fff;border-right:1.4px solid #4d4d4f;border-bottom:1.4px solid #58585a;border-top:1px solid #bfc0c2;"></div>
<div style="left:1445.3px;top:89.4px;width:75.4px;height:14.4px;background:linear-gradient(180deg,#fff 0%,#fafafa 60%,#ececee 100%);border-bottom:1px solid #d6d7da;"></div>
<div style="left:900.4px;top:76.2px;width:11.8px;height:5.8px;background:#f4dc4c;border:1px solid #c2a83a;border-radius:3.5px 3.5px 0 0;"></div>
<div style="left:868.6px;top:80.8px;width:161.4px;height:85px;background:#fff;border:2px solid #1c1c1c;"></div>
<div style="left:871.6px;top:86.2px;width:24.8px;height:12.6px;background:linear-gradient(180deg,#d4d4d4,#b9b9b9);border:1px solid #6e6e6e;box-shadow:inset 0 0 0 1px #e8e8e8;"></div>
<svg style="left:874px;top:88.4px;" width="20" height="8.4" viewBox="0 0 20 8.4"><g fill="none" stroke="#3c3c3c" stroke-width=".8"><path d="M2 2 L5 4.2 L2 6.4 M4.6 2 L7.6 4.2 L4.6 6.4 M7.4 4.2 H10.6 M18 2 L15 4.2 L18 6.4 M10.6 2.6 H16 M10.6 5.8 H16 M12 1.8 L14.4 6.6"/></g></svg>
<div class="t cjk" style="left:897.6px;top:84.2px;line-height:12px;font-size:8.2px;color:#222;">系统</div>
<div style="left:856.2px;top:119.8px;width:7.2px;height:7.2px;border-radius:50%;background:#d3e4a6;border:1.5px solid #6f9c3c;"></div>
<div style="left:862.6px;top:122.9px;width:6.4px;height:1.2px;background:#333;"></div>
<div class="t cjk" style="left:875px;top:117.8px;line-height:12px;font-size:8.2px;color:#222;">输入</div>
<div class="t cjk" style="left:898px;top:117.8px;line-height:12px;font-size:9.4px;color:#b3472a;font-weight:bold;">【</div>
<div class="t mono" style="left:915.4px;top:117.8px;line-height:12px;font-size:9.55px;color:#c24e2c;">ComAntenna</div>
<div class="t cjk" style="left:884.6px;top:151.2px;line-height:12px;font-size:8.4px;color:#333;">控制</div>
<div class="t cjk" style="left:910px;top:151.2px;line-height:12px;font-size:8.4px;color:#333;">管理</div>
<div class="t cjk" style="left:935px;top:151.2px;line-height:12px;font-size:8.4px;color:#333;">状态</div>
<div class="t cjk" style="left:960.4px;top:151.2px;line-height:12px;font-size:8.4px;color:#333;">输出</div>
<div style="left:887px;top:165.8px;width:11.8px;height:6px;background:#d3ddb4;border:1px solid #8c927c;border-top:none;"></div>
<div style="left:912.6px;top:165.8px;width:11.8px;height:6px;background:#d3ddb4;border:1px solid #8c927c;border-top:none;"></div>
<div style="left:938.2px;top:165.8px;width:11.8px;height:6px;background:#d3ddb4;border:1px solid #8c927c;border-top:none;"></div>
<svg style="left:858.6px;top:187.4px;" width="6" height="5.2" viewBox="0 0 6 5.2"><path d="M5.2 0.4 V4.6 H0.6 Z" fill="#4a4a4a"/></svg>
<div class="t mono" style="left:870px;top:185.4px;line-height:12px;font-size:9.3px;color:#0c0c0c;font-weight:bold;-webkit-text-stroke:.25px #0c0c0c;">ComAntenna</div>
<svg style="left:873.4px;top:201.8px;" width="6" height="5.2" viewBox="0 0 6 5.2"><path d="M5.2 0.4 V4.6 H0.6 Z" fill="#4a4a4a"/></svg>
<div class="t cjk" style="left:884.6px;top:198.6px;line-height:12px;font-size:8.6px;color:#1a1a1a;">管理接口</div>
<div class="t mono" style="left:899.4px;top:212.2px;line-height:12px;font-size:9.25px;color:#0c0c0c;font-weight:bold;-webkit-text-stroke:.25px #0c0c0c;">void CreateEntity()</div>
<div class="t mono" style="left:899.4px;top:222.72px;line-height:12px;font-size:9.25px;color:#0c0c0c;font-weight:bold;-webkit-text-stroke:.25px #0c0c0c;">void DestroyEntity()</div>
<div class="t mono" style="left:899.4px;top:233.24px;line-height:12px;font-size:9.25px;color:#0c0c0c;font-weight:bold;-webkit-text-stroke:.25px #0c0c0c;">void DestroyEntityAll()</div>
<div class="t mono" style="left:899.4px;top:243.76px;line-height:12px;font-size:9.25px;color:#0c0c0c;font-weight:bold;-webkit-text-stroke:.25px #0c0c0c;">void FindEntity()</div>
<div class="t mono" style="left:899.4px;top:254.28px;line-height:12px;font-size:9.25px;color:#0c0c0c;font-weight:bold;-webkit-text-stroke:.25px #0c0c0c;">void FindEntityAll()</div>
<div class="t mono" style="left:899.4px;top:264.8px;line-height:12px;font-size:9.25px;color:#0c0c0c;font-weight:bold;-webkit-text-stroke:.25px #0c0c0c;">void SetShareMemory()</div>
<div class="t mono" style="left:899.4px;top:275.32px;line-height:12px;font-size:9.25px;color:#0c0c0c;font-weight:bold;-webkit-text-stroke:.25px #0c0c0c;">void GetShareMemory()</div>
<div class="t mono" style="left:899.4px;top:285.84px;line-height:12px;font-size:9.25px;color:#0c0c0c;font-weight:bold;-webkit-text-stroke:.25px #0c0c0c;">void CreateShareMemory()</div>
<div class="t mono" style="left:899.4px;top:296.36px;line-height:12px;font-size:9.25px;color:#0c0c0c;font-weight:bold;-webkit-text-stroke:.25px #0c0c0c;">void DestroyShareMemory()</div>
<div class="t mono" style="left:899.4px;top:306.88px;line-height:12px;font-size:9.25px;color:#0c0c0c;font-weight:bold;-webkit-text-stroke:.25px #0c0c0c;">void IncreaseShareMemRef()</div>
<div class="t mono" style="left:899.4px;top:317.4px;line-height:12px;font-size:9.25px;color:#0c0c0c;font-weight:bold;-webkit-text-stroke:.25px #0c0c0c;">void DecreaseShareMemRef()</div>
<div class="t mono" style="left:899.4px;top:327.92px;line-height:12px;font-size:9.25px;color:#0c0c0c;font-weight:bold;-webkit-text-stroke:.25px #0c0c0c;">void ResetShareMemRef()</div>
<svg style="left:873.4px;top:342.4px;" width="6" height="5.2" viewBox="0 0 6 5.2"><path d="M5.2 0.4 V4.6 H0.6 Z" fill="#4a4a4a"/></svg>
<div class="t cjk" style="left:884.6px;top:339.2px;line-height:12px;font-size:8.6px;color:#1a1a1a;">控制接口</div>
<div class="t mono" style="left:899.4px;top:352.4px;line-height:12px;font-size:9.25px;color:#0c0c0c;font-weight:bold;-webkit-text-stroke:.25px #0c0c0c;">void Initialize()</div>
<div class="t mono" style="left:899.4px;top:362.92px;line-height:12px;font-size:9.25px;color:#0c0c0c;font-weight:bold;-webkit-text-stroke:.25px #0c0c0c;">void Execute()</div>
<div class="t mono" style="left:899.4px;top:373.44px;line-height:12px;font-size:9.25px;color:#0c0c0c;font-weight:bold;-webkit-text-stroke:.25px #0c0c0c;">void Pause()</div>
<div class="t mono" style="left:899.4px;top:383.96px;line-height:12px;font-size:9.25px;color:#0c0c0c;font-weight:bold;-webkit-text-stroke:.25px #0c0c0c;">void Resume()</div>
<div class="t mono" style="left:899.4px;top:394.48px;line-height:12px;font-size:9.25px;color:#0c0c0c;font-weight:bold;-webkit-text-stroke:.25px #0c0c0c;">void SetPInputValue(ui</div>
<div class="t mono" style="left:899.4px;top:405px;line-height:12px;font-size:9.25px;color:#0c0c0c;font-weight:bold;-webkit-text-stroke:.25px #0c0c0c;">void GetPInputValue(ui</div>
<div class="t mono" style="left:899.4px;top:415.52px;line-height:12px;font-size:9.25px;color:#0c0c0c;font-weight:bold;-webkit-text-stroke:.25px #0c0c0c;">void SetPOutputValue(u</div>
<div class="t mono" style="left:899.4px;top:426.04px;line-height:12px;font-size:9.25px;color:#0c0c0c;font-weight:bold;-webkit-text-stroke:.25px #0c0c0c;">void GetPOutputValue(u</div>
<div style="left:853.8px;top:430.8px;width:180.8px;height:10.6px;background:#f0f0f2;"></div>
<div style="left:1023.8px;top:183.2px;width:10.8px;height:247.6px;background:#f4f4f6;"></div>
<div style="left:1023.8px;top:430.8px;width:10.8px;height:10.6px;background:#d4d5d7;"></div>
<div style="left:867.4px;top:431.2px;width:40.8px;height:9.8px;border:1px solid #a3a7b0;border-radius:2px;background:linear-gradient(180deg,#f6f6f7 0%,#e6e7ea 50%,#d3d5d9 100%);"></div>
<svg style="left:885.4px;top:433.6px;" width="5" height="5" viewBox="0 0 5 5"><g fill="#8d9099"><rect x="0.6" y="0.5" width=".7" height="4"/><rect x="2.1" y="0.5" width=".7" height="4"/><rect x="3.6" y="0.5" width=".7" height="4"/></g></svg>
<svg style="left:857.6px;top:433.2px;" width="4" height="6" viewBox="0 0 4 6"><path d="M3.6 0.4 V5.6 L0.4 3 Z" fill="#5a5f6b"/></svg>
<svg style="left:1015.2px;top:433.2px;" width="4" height="6" viewBox="0 0 4 6"><path d="M0.4 0.4 V5.6 L3.6 3 Z" fill="#5a5f6b"/></svg>
<svg style="left:1026.4px;top:422px;" width="6" height="4" viewBox="0 0 6 4"><path d="M0.4 0.4 H5.6 L3 3.6 Z" fill="#5a5f6b"/></svg>
<div style="left:1428px;top:69.6px;width:29.6px;height:19.9px;background:#fff;border-top:1px solid #ededee;"></div>
<div style="left:1420px;top:88.4px;width:26px;height:222.6px;background:#fff;border-top:1px solid #bfc0c2;border-bottom:1.4px solid #58585a;"></div>
<div style="left:1420px;top:311px;width:26px;height:3.4px;background:#f1f1f2;"></div>
<div style="left:1420px;top:89.4px;width:26px;height:14.4px;background:linear-gradient(180deg,#fff 0%,#fafafa 60%,#ececee 100%);border-bottom:1px solid #d6d7da;"></div>
<div class="t cjk" style="left:1420.8px;top:74px;line-height:12px;font-size:9.2px;color:#b25f24;font-weight:500;">周期】</div>
<div style="left:1444.2px;top:89.4px;width:0.8px;height:25.2px;background:#d9dadd;"></div>
<div class="t song" style="left:1446.8px;top:91.8px;line-height:12px;font-size:8.5px;color:#111;font-weight:bold;letter-spacing:1.05px;">Value</div>
<div style="left:1427px;top:114px;width:93px;height:0.8px;background:#e1e2e5;"></div>
<div class="t song" style="left:1447px;top:103.6px;line-height:12px;font-size:8.5px;color:#111;font-weight:bold;">0</div>
<div class="t mono" style="left:1424.4px;top:102.4px;line-height:12px;font-size:7.4px;color:#222;font-weight:bold;letter-spacing:-1.1px;">----</div>
<div class="t mono" style="left:1402px;top:327.2px;line-height:12px;font-size:7.27px;color:#222;font-weight:bold;">QComAntenna.dll<span style="font-size:8.6px">】</span></div>
<div style="left:961.9px;top:65.6px;width:466.1px;height:342.6px;border-radius:5.5px;border:1px solid #8f9cb8;border-top-color:#9db2d6;background:linear-gradient(100deg,rgba(255,255,255,.30) 0%,rgba(255,255,255,.24) 12%,rgba(255,255,255,0) 22%,rgba(255,255,255,0) 58%,rgba(255,255,255,.24) 82%,rgba(255,255,255,.12) 100%),linear-gradient(180deg,#6886b8 0%,#6280b1 12%,#6280b0 100%);box-shadow:inset 0 0 0 1px rgba(200,214,236,.85);"></div>
<div style="left:963.9px;top:84.8px;width:462.1px;height:321.4px;border-radius:0 0 3px 3px;background:linear-gradient(180deg,rgba(95,124,174,0) 0%,rgba(95,124,174,0) -8.34%,#5e7aab -2.34%,#5e7aab 100%);"></div>
<div style="left:966.4px;top:85.8px;width:455.9px;height:318.1px;background:#9fb0d0;box-shadow:0 0 0 .6px rgba(170,188,220,.8);"></div>
<div style="left:967.4px;top:86.8px;width:453.9px;height:316.1px;background:#fff;"></div>
<div style="left:964px;top:67.5px;width:81px;height:18.5px;background:radial-gradient(ellipse 50% 55% at 42% 48%,rgba(255,255,255,.55) 0%,rgba(255,255,255,.3) 55%,rgba(255,255,255,0) 100%);"></div>
<svg style="left:968px;top:71.2px;" width="11.6" height="10.2" viewBox="0 0 11.6 10.2"><rect x="0" y="0" width="11.6" height="10.2" fill="#fdfdfd"/><circle cx="5.8" cy="2.5" r="1.8" fill="#4597c4"/><circle cx="5.8" cy="7.7" r="1.8" fill="#4597c4"/><circle cx="3" cy="5.1" r="1.8" fill="#46a6b4"/><circle cx="8.6" cy="5.1" r="1.8" fill="#46a6b4"/><circle cx="5.8" cy="5.1" r="2" fill="#f39445"/></svg>
<div class="t cjk" style="left:983px;top:69.9px;line-height:12px;font-size:8.65px;color:#15161c;text-shadow:0 0 3px #fff,0 0 5px #fff;">构件测试...</div>
<div style="left:1369px;top:66px;width:20px;height:13.2px;border-radius:0 0 0 4px;border:1px solid #56688e;border-top:none;background:linear-gradient(180deg,#b9c6df 0%,#9fb0d2 45%,#8399c3 52%,#9db0d3 100%);box-shadow:inset 0 0 0 1px rgba(255,255,255,.3);"></div>
<div class="t cjk" style="left:1376px;top:66.2px;line-height:12px;font-size:9px;color:#fff;font-weight:bold;text-shadow:0 0 1px #39435f,0 0 1.5px #39435f;">?</div>
<div style="left:1388.4px;top:66px;width:33.8px;height:13.2px;border-radius:0 0 4px 0;border:1px solid #8a6253;border-top:none;background:linear-gradient(180deg,#e2b49c 0%,#d39474 42%,#b95d34 52%,#cf8660 100%);box-shadow:inset 0 0 0 1px rgba(255,255,255,.35);"></div>
<div class="t cjk" style="left:1401.4px;top:65.8px;line-height:12px;font-size:10.5px;color:#fff;font-weight:bold;text-shadow:0 0 1px #5a3326,0 0 1.5px #5a3326;transform:scaleX(1.25);transform-origin:left center;">x</div>
<div style="left:967.4px;top:86.8px;width:453.9px;height:316.1px;background:#cbccba;"></div>
<div style="left:970px;top:88.5px;width:448.7px;height:286.7px;background:#231f20;overflow:hidden;"></div>
<div class="t con" style="left:972.4px;top:93.3px;line-height:12px;font-size:9.45px;color:#ececec;">&gt;&gt;</div>
<div class="t con" style="left:996.2px;top:93.3px;line-height:12px;font-size:9.45px;color:#ececec;"><span class="cj">构件名称：</span>ComAntenna</div>
<div class="t con" style="left:972.4px;top:105.76px;line-height:12px;font-size:9.45px;color:#ececec;">&gt;&gt;</div>
<div class="t con" style="left:996.2px;top:105.76px;line-height:12px;font-size:9.45px;color:#ececec;"><span class="cj">构件版本：</span>V1.0</div>
<div class="t con" style="left:972.4px;top:118.21px;line-height:12px;font-size:9.45px;color:#ececec;">&gt;&gt;</div>
<div class="t con" style="left:972.4px;top:130.67px;line-height:12px;font-size:9.45px;color:#ececec;">&gt;&gt;</div>
<div class="t con" style="left:996.2px;top:130.67px;line-height:12px;font-size:9.45px;color:#ececec;"><span class="cj">测试时间：</span>2016-11-24</div>
<div class="t con" style="left:972.4px;top:143.12px;line-height:12px;font-size:9.45px;color:#ececec;">&gt;&gt;</div>
<div class="t con" style="left:996.2px;top:143.12px;line-height:12px;font-size:9.45px;color:#ececec;"><span class="cj">测试人员：</span></div>
<div class="t con" style="left:972.4px;top:155.58px;line-height:12px;font-size:9.45px;color:#ececec;">&gt;&gt;</div>
<div class="t con" style="left:972.4px;top:168.04px;line-height:12px;font-size:9.45px;color:#ececec;">&gt;&gt;</div>
<div class="t con" style="left:996.2px;top:168.04px;line-height:12px;font-size:9.45px;color:#ececec;"><span class="cj">接口测试开始</span></div>
<div class="t con" style="left:972.4px;top:180.49px;line-height:12px;font-size:9.45px;color:#ececec;">&gt;&gt;</div>
<div class="t con" style="left:996.2px;top:180.49px;line-height:12px;font-size:9.45px;color:#ececec;"><span style="color:#1fa463"><span class="cj">管理接口【</span> Begin <span class="cj">】</span></span></div>
<div class="t con" style="left:972.4px;top:192.95px;line-height:12px;font-size:9.45px;color:#ececec;">&gt;&gt;</div>
<div class="t con" style="left:996.2px;top:192.95px;line-height:12px;font-size:9.45px;color:#ececec;"><span style="color:#e2d23c"><span class="cj">方法</span></span> <span class="cj">函数名称</span><span style="color:#d8503a">&lt;CreateEntity&gt;</span> <span class="cj">加载</span><span style="color:#d8503a">&lt;<span class="cj">成功</span>&gt;</span> <span class="cj">执行</span><span style="color:#d8503a">&lt;<span class="cj">成功</span>&gt;</span></div>
<div class="t con" style="left:972.4px;top:205.4px;line-height:12px;font-size:9.45px;color:#ececec;">&gt;&gt;</div>
<div class="t con" style="left:996.2px;top:205.4px;line-height:12px;font-size:9.45px;color:#ececec;"><span style="color:#e2d23c"><span class="cj">方法</span></span> <span class="cj">函数名称</span><span style="color:#d8503a">&lt;DestroyEntity&gt;</span> <span class="cj">加载</span><span style="color:#d8503a">&lt;<span class="cj">成功</span>&gt;</span> <span class="cj">执行</span><span style="color:#d8503a">&lt;<span class="cj">成功</span>&gt;</span></div>
<div class="t con" style="left:972.4px;top:217.86px;line-height:12px;font-size:9.45px;color:#ececec;">&gt;&gt;</div>
<div class="t con" style="left:996.2px;top:217.86px;line-height:12px;font-size:9.45px;color:#ececec;"><span style="color:#e2d23c"><span class="cj">方法</span></span> <span class="cj">函数名称</span><span style="color:#d8503a">&lt;DestroyEntityAll&gt;</span> <span class="cj">加载</span><span style="color:#d8503a">&lt;<span class="cj">成功</span>&gt;</span> <span class="cj">执行</span><span style="color:#d8503a">&lt;<span class="cj">成功</span>&gt;</span></div>
<div class="t con" style="left:972.4px;top:230.32px;line-height:12px;font-size:9.45px;color:#ececec;">&gt;&gt;</div>
<div class="t con" style="left:996.2px;top:230.32px;line-height:12px;font-size:9.45px;color:#ececec;"><span style="color:#e2d23c"><span class="cj">方法</span></span> <span class="cj">函数名称</span><span style="color:#d8503a">&lt;FindEntity&gt;</span> <span class="cj">加载</span><span style="color:#d8503a">&lt;<span class="cj">成功</span>&gt;</span> <span class="cj">执行</span><span style="color:#d8503a">&lt;<span class="cj">成功</span>&gt;</span></div>
<div class="t con" style="left:972.4px;top:242.77px;line-height:12px;font-size:9.45px;color:#ececec;">&gt;&gt;</div>
<div class="t con" style="left:996.2px;top:242.77px;line-height:12px;font-size:9.45px;color:#ececec;"><span style="color:#e2d23c"><span class="cj">方法</span></span> <span class="cj">函数名称</span><span style="color:#d8503a">&lt;FindEntityAll&gt;</span> <span class="cj">加载</span><span style="color:#d8503a">&lt;<span class="cj">成功</span>&gt;</span> <span class="cj">执行</span><span style="color:#d8503a">&lt;<span class="cj">成功</span>&gt;</span></div>
<div class="t con" style="left:972.4px;top:255.23px;line-height:12px;font-size:9.45px;color:#ececec;">&gt;&gt;</div>
<div class="t con" style="left:996.2px;top:255.23px;line-height:12px;font-size:9.45px;color:#ececec;"><span style="color:#e2d23c"><span class="cj">方法</span></span> <span class="cj">函数名称</span><span style="color:#d8503a">&lt;SetShareMemory&gt;</span> <span class="cj">加载</span><span style="color:#d8503a">&lt;<span class="cj">成功</span>&gt;</span> <span class="cj">执行</span><span style="color:#d8503a">&lt;<span class="cj">成功</span>&gt;</span></div>
<div class="t con" style="left:972.4px;top:267.68px;line-height:12px;font-size:9.45px;color:#ececec;">&gt;&gt;</div>
<div class="t con" style="left:996.2px;top:267.68px;line-height:12px;font-size:9.45px;color:#ececec;"><span style="color:#e2d23c"><span class="cj">方法</span></span> <span class="cj">函数名称</span><span style="color:#d8503a">&lt;GetShareMemory&gt;</span> <span class="cj">加载</span><span style="color:#d8503a">&lt;<span class="cj">成功</span>&gt;</span> <span class="cj">执行</span><span style="color:#d8503a">&lt;<span class="cj">成功</span>&gt;</span></div>
<div class="t con" style="left:972.4px;top:280.14px;line-height:12px;font-size:9.45px;color:#ececec;">&gt;&gt;</div>
<div class="t con" style="left:996.2px;top:280.14px;line-height:12px;font-size:9.45px;color:#ececec;"><span style="color:#e2d23c"><span class="cj">方法</span></span> <span class="cj">函数名称</span><span style="color:#d8503a">&lt;CreateShareMemory&gt;</span> <span class="cj">加载</span><span style="color:#d8503a">&lt;<span class="cj">成功</span>&gt;</span> <span class="cj">执行</span><span style="color:#d8503a">&lt;<span class="cj">成功</span>&gt;</span></div>
<div class="t con" style="left:972.4px;top:292.6px;line-height:12px;font-size:9.45px;color:#ececec;">&gt;&gt;</div>
<div class="t con" style="left:996.2px;top:292.6px;line-height:12px;font-size:9.45px;color:#ececec;"><span style="color:#e2d23c"><span class="cj">方法</span></span> <span class="cj">函数名称</span><span style="color:#d8503a">&lt;DestroyShareMemory&gt;</span> <span class="cj">加载</span><span style="color:#d8503a">&lt;<span class="cj">成功</span>&gt;</span> <span class="cj">执行</span><span style="color:#d8503a">&lt;<span class="cj">成功</span>&gt;</span></div>
<div class="t con" style="left:972.4px;top:305.05px;line-height:12px;font-size:9.45px;color:#ececec;">&gt;&gt;</div>
<div class="t con" style="left:996.2px;top:305.05px;line-height:12px;font-size:9.45px;color:#ececec;"><span style="color:#e2d23c"><span class="cj">方法</span></span> <span class="cj">函数名称</span><span style="color:#d8503a">&lt;IncreaseShareMemRef&gt;</span> <span class="cj">加载</span><span style="color:#d8503a">&lt;<span class="cj">成功</span>&gt;</span> <span class="cj">执行</span><span style="color:#d8503a">&lt;<span class="cj">成功</span>&gt;</span></div>
<div class="t con" style="left:972.4px;top:317.51px;line-height:12px;font-size:9.45px;color:#ececec;">&gt;&gt;</div>
<div class="t con" style="left:996.2px;top:317.51px;line-height:12px;font-size:9.45px;color:#ececec;"><span style="color:#e2d23c"><span class="cj">方法</span></span> <span class="cj">函数名称</span><span style="color:#d8503a">&lt;DecreaseShareMemRef&gt;</span> <span class="cj">加载</span><span style="color:#d8503a">&lt;<span class="cj">成功</span>&gt;</span> <span class="cj">执行</span><span style="color:#d8503a">&lt;<span class="cj">成功</span>&gt;</span></div>
<div class="t con" style="left:972.4px;top:329.96px;line-height:12px;font-size:9.45px;color:#ececec;">&gt;&gt;</div>
<div class="t con" style="left:996.2px;top:329.96px;line-height:12px;font-size:9.45px;color:#ececec;"><span style="color:#e2d23c"><span class="cj">方法</span></span> <span class="cj">函数名称</span><span style="color:#d8503a">&lt;ResetShareMemRef&gt;</span> <span class="cj">加载</span><span style="color:#d8503a">&lt;<span class="cj">成功</span>&gt;</span> <span class="cj">执行</span><span style="color:#d8503a">&lt;<span class="cj">成功</span>&gt;</span></div>
<div class="t con" style="left:972.4px;top:342.42px;line-height:12px;font-size:9.45px;color:#ececec;">&gt;&gt;</div>
<div class="t con" style="left:996.2px;top:342.42px;line-height:12px;font-size:9.45px;color:#ececec;"><span style="color:#1fa463"><span class="cj">管理接口【</span> End *********<span class="cj">成功</span> 12 <span class="cj">项</span>,<span class="cj">失败</span> 0 <span class="cj">项</span>********* <span class="cj">】</span></span></div>
<div class="t con" style="left:972.4px;top:354.88px;line-height:12px;font-size:9.45px;color:#ececec;">&gt;&gt;</div>
<div class="t con" style="left:996.2px;top:354.88px;line-height:12px;font-size:9.45px;color:#ececec;">********</div>
<div class="t con" style="left:972.4px;top:367.33px;line-height:12px;font-size:9.45px;color:#ececec;">&gt;&gt;</div>
<div class="t con" style="left:996.2px;top:367.33px;line-height:12px;font-size:9.45px;color:#ececec;"><span style="color:#1fa463"><span class="cj">控制接口【</span> Begin <span class="cj">】</span></span></div>
<div style="left:1120px;top:379.2px;width:89.6px;height:21px;border:1px solid #3d9ad8;border-radius:2.5px;background:linear-gradient(180deg,#f1f6fc 0%,#e3edf8 48%,#d0e0f2 52%,#c6d9ef 100%);box-shadow:inset 0 0 0 1px #7fcdf3;"></div>
<div class="t cjk" style="left:1125.6px;top:383.8px;line-height:12px;font-size:8.5px;color:#2a2c33;">输出测试结果到文件</div>
<div style="left:1218.2px;top:379.2px;width:52.6px;height:21px;border:1px solid #9fa2a9;border-radius:2.5px;background:linear-gradient(180deg,#f5f5f6 0%,#ececee 48%,#dedfe2 52%,#d2d3d7 100%);box-shadow:inset 0 0 0 1px rgba(255,255,255,.7);"></div>
<div class="t cjk" style="left:1235.2px;top:383.8px;line-height:12px;font-size:8.5px;color:#2a2c33;">关闭</div>
<div class="t serif" style="left:208.4px;top:474.5px;line-height:36px;font-size:31px;color:#1d1a1b;letter-spacing:1.1px;word-spacing:-2.2px;-webkit-text-stroke:.3px #1d1a1b;">(a) component loading</div>
<div class="t serif" style="left:1082.6px;top:474.5px;line-height:36px;font-size:31px;color:#1d1a1b;letter-spacing:1.2px;word-spacing:-2.6px;-webkit-text-stroke:.3px #1d1a1b;">(b) static testing</div>
</div>
</body></html>
